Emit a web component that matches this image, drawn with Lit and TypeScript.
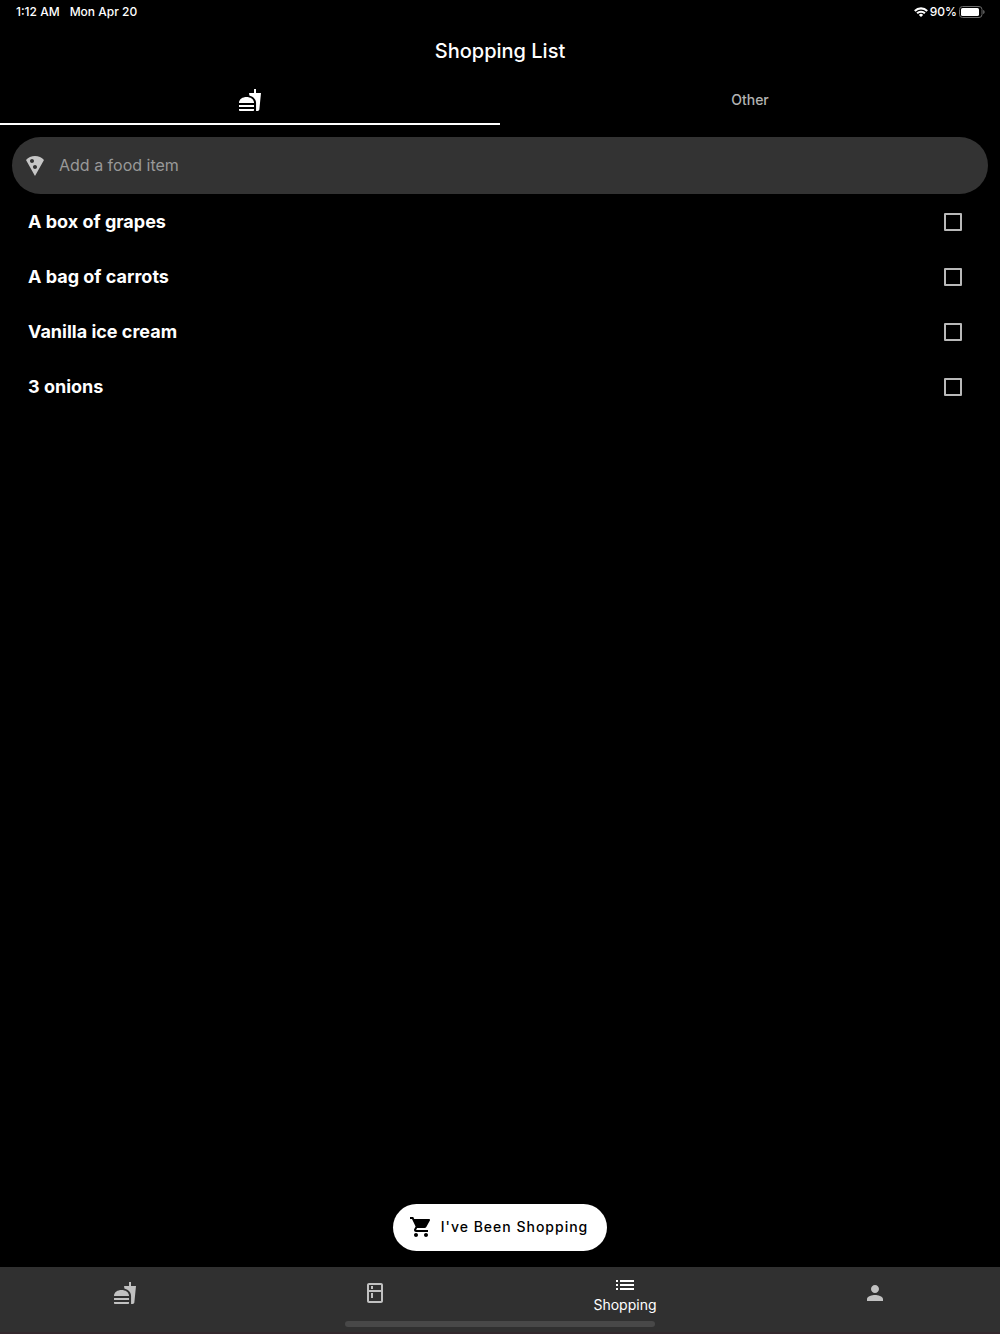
import { LitElement, html, css, svg } from "lit";
import { customElement, property, state } from "lit/decorators.js";

const ICONS: Record<string, string> = {
  fastfood:
    "M18.06 22.99h1.66c.84 0 1.53-.64 1.63-1.46L23 5.05h-5V1h-1.97v4.05h-4.97l.3 2.34c1.71.47 3.31 1.32 4.27 2.26 1.44 1.42 2.43 2.89 2.43 5.29v8.05zM1 21.99V21h15.03v.99c0 .55-.45 1-1.01 1H2.01c-.56 0-1.01-.45-1.01-1zm15.03-7c0-8-15.03-8-15.03 0h15.03zM1.02 17h15v2h-15z",
  pizza:
    "M12 2C8.43 2 5.23 3.54 3.01 6L12 22l8.99-16C18.78 3.55 15.57 2 12 2zM7 7c0-1.1.9-2 2-2s2 .9 2 2-.9 2-2 2-2-.9-2-2zm5 8c-1.1 0-2-.9-2-2s.9-2 2-2 2 .9 2 2-.9 2-2 2z",
  cart:
    "M7 18c-1.1 0-1.99.9-1.99 2S5.9 22 7 22s2-.9 2-2-.9-2-2-2zM1 2v2h2l3.6 7.59-1.35 2.45c-.16.28-.25.61-.25.96 0 1.1.9 2 2 2h12v-2H7.42c-.14 0-.25-.11-.25-.25l.03-.12.9-1.63h7.45c.75 0 1.41-.41 1.75-1.03l3.58-6.49c.08-.14.12-.31.12-.48 0-.55-.45-1-1-1H5.21l-.94-2H1zm16 16c-1.1 0-1.99.9-1.99 2s.89 2 1.99 2 2-.9 2-2-.9-2-2-2z",
  kitchen:
    "M18 2.01L6 2c-1.1 0-2 .89-2 2v16c0 1.1.9 2 2 2h12c1.1 0 2-.9 2-2V4c0-1.1-.9-1.99-2-1.99zM18 20H6v-9.02h12V20zm0-11H6V4h12v5zM8 5h2v3H8zm0 7h2v5H8z",
  list:
    "M3 13h2v-2H3v2zm0 4h2v-2H3v2zm0-8h2V7H3v2zm4 4h14v-2H7v2zm0 4h14v-2H7v2zM7 7v2h14V7H7z",
  person:
    "M12 12c2.21 0 4-1.79 4-4s-1.79-4-4-4-4 1.79-4 4 1.79 4 4 4zm0 2c-2.67 0-8 1.34-8 4v2h16v-2c0-2.66-5.33-4-8-4z",
};

@customElement("app-icon")
export class AppIcon extends LitElement {
  @property() name = "";

  static styles = css`
    :host { display: block; flex: none; width: 24px; height: 24px; }
    .glyph { display: block; width: 100%; height: 100%; fill: currentColor; }
  `;

  render() {
    return html`<svg class="glyph" viewBox="0 0 24 24" aria-hidden="true">
      ${svg`<path d=${ICONS[this.name] ?? ""}></path>`}
    </svg>`;
  }
}

@customElement("status-bar")
export class StatusBar extends LitElement {
  static styles = css`
    :host {
      display: flex;
      justify-content: space-between;
      align-items: center;
      height: 24px;
      padding: 0 15px 0 16px;
      color: #fff;
      font-size: 12px;
      line-height: 16px;
      font-weight: 500;
    }
    .left { display: flex; gap: 10px; }
    .right { display: flex; align-items: center; gap: 2px; }
    .wifi, .battery { display: block; }
  `;

  render() {
    return html`
      <div class="left"><span>1:12 AM</span><span>Mon Apr 20</span></div>
      <div class="right">
        <svg class="wifi" width="14" height="10" viewBox="0 0 14 10" aria-hidden="true">
          <g fill="none" stroke="#fff" stroke-width="2.1">
            <path d="M.8 3.9a8.8 8.8 0 0 1 12.4 0"></path>
            <path d="M3.1 6.3a5.5 5.5 0 0 1 7.8 0"></path>
          </g>
          <path d="M7 10 4.900 7.900a3 3 0 0 1 4.200 0z" fill="#fff"></path>
        </svg>
        <span>90%</span>
        <svg class="battery" width="26" height="12" viewBox="0 0 26 12" aria-hidden="true">
          <rect x=".5" y=".5" width="22.5" height="11" rx="3" fill="none" stroke="#6b6b6b"></rect>
          <rect x="2" y="2" width="18" height="8" rx="1.6" fill="#fff"></rect>
          <path d="M24.2 4v4c.9-.4 1.4-1.1 1.4-2s-.5-1.6-1.4-2z" fill="#6b6b6b"></path>
        </svg>
      </div>
    `;
  }
}

interface Item {
  label: string;
  done: boolean;
}

@customElement("app-root")
export class AppRoot extends LitElement {
  @state() private items: Item[] = [
    { label: "A box of grapes", done: false },
    { label: "A bag of carrots", done: false },
    { label: "Vanilla ice cream", done: false },
    { label: "3 onions", done: false },
  ];

  static styles = css`
    :host {
      display: flex;
      flex-direction: column;
      min-height: 100vh;
      background: #000;
      color: #fff;
      font-family: Inter, "Liberation Sans", sans-serif;
    }
    .title {
      margin: 0;
      padding: 13px 16px 12px;
      font-size: 20px;
      line-height: 28px;
      font-weight: 500;
      text-align: center;
    }
    .tabs { display: grid; grid-template-columns: 1fr 1fr; }
    .tab {
      display: flex;
      align-items: center;
      justify-content: center;
      height: 48px;
      padding: 0;
      border: 0;
      border-bottom: 2px solid transparent;
      background: none;
      color: #b3b3b3;
      font: 500 14px/20px Inter, "Liberation Sans", sans-serif;
    }
    .tab.active { color: #fff; border-color: #fff; }
    .main { flex: 1; display: flex; flex-direction: column; padding: 12px 12px 16px; }
    .field {
      display: flex;
      align-items: center;
      gap: 12px;
      height: 57px;
      padding: 0 11px;
      border-radius: 29px;
      background: #333;
      color: #c6c6c6;
    }
    .input {
      flex: 1;
      min-width: 0;
      padding: 0 0 2px;
      border: 0;
      outline: 0;
      background: none;
      color: #fff;
      font: 400 16px/24px Inter, "Liberation Sans", sans-serif;
    }
    .input::placeholder { color: #999; opacity: 1; }
    .list { list-style: none; margin: 0; padding: 0 14px 0 16px; }
    .row { display: flex; align-items: center; height: 55px; }
    .name { flex: 1; font-size: 18px; line-height: 24px; font-weight: 700; }
    .check {
      appearance: none;
      width: 18px;
      height: 18px;
      margin: 0 12px 0 0;
      border: 2px solid #b9b9b9;
      border-radius: 1px;
    }
    .check:checked { background: #b9b9b9; }
    .shopped {
      display: flex;
      align-items: center;
      gap: 8px;
      align-self: center;
      height: 47px;
      margin-top: auto;
      padding: 0 19px 1px 16px;
      border: 0;
      border-radius: 24px;
      background: #fff;
      color: #000;
      font: 500 14px/20px Inter, "Liberation Sans", sans-serif;
      letter-spacing: 1px;
    }
    .bottom { background: #303030; padding-bottom: 5px; border-bottom: 2px solid #33282d; }
    .nav { display: grid; grid-template-columns: repeat(4, 1fr); height: 52px; padding-bottom: 2px; }
    .link {
      display: flex;
      flex-direction: column;
      align-items: center;
      justify-content: center;
      color: #c1c1c1;
      text-decoration: none;
      font-size: 14px;
      line-height: 16px;
    }
    .link.active { color: #fff; }
    .home { width: 31%; height: 6px; margin: 0 auto; border-radius: 3px; background: #484848; }
  `;

  private toggle(index: number) {
    this.items = this.items.map((item, i) => (i === index ? { ...item, done: !item.done } : item));
  }

  render() {
    return html`
      <status-bar></status-bar>
      <h1 class="title">Shopping List</h1>
      <div class="tabs" role="tablist">
        <button class="tab active" role="tab" aria-selected="true" aria-label="Food">
          <app-icon name="fastfood"></app-icon>
        </button>
        <button class="tab" role="tab" aria-selected="false">Other</button>
      </div>
      <main class="main">
        <label class="field">
          <app-icon name="pizza"></app-icon>
          <input class="input" type="text" placeholder="Add a food item" aria-label="Add a food item" />
        </label>
        <ul class="list">
          ${this.items.map(
            (item, i) => html`<li class="row">
              <label class="name" for="item-${i}">${item.label}</label>
              <input
                class="check"
                id="item-${i}"
                type="checkbox"
                .checked=${item.done}
                @change=${() => this.toggle(i)}
              />
            </li>`
          )}
        </ul>
        <button class="shopped"><app-icon name="cart"></app-icon>I've Been Shopping</button>
      </main>
      <footer class="bottom">
        <nav class="nav">
          <a class="link" href="#food" aria-label="Food"><app-icon name="fastfood"></app-icon></a>
          <a class="link" href="#kitchen" aria-label="Kitchen"><app-icon name="kitchen"></app-icon></a>
          <a class="link active" href="#shopping" aria-current="page">
            <app-icon name="list"></app-icon>Shopping
          </a>
          <a class="link" href="#profile" aria-label="Profile"><app-icon name="person"></app-icon></a>
        </nav>
        <div class="home"></div>
      </footer>
    `;
  }
}
